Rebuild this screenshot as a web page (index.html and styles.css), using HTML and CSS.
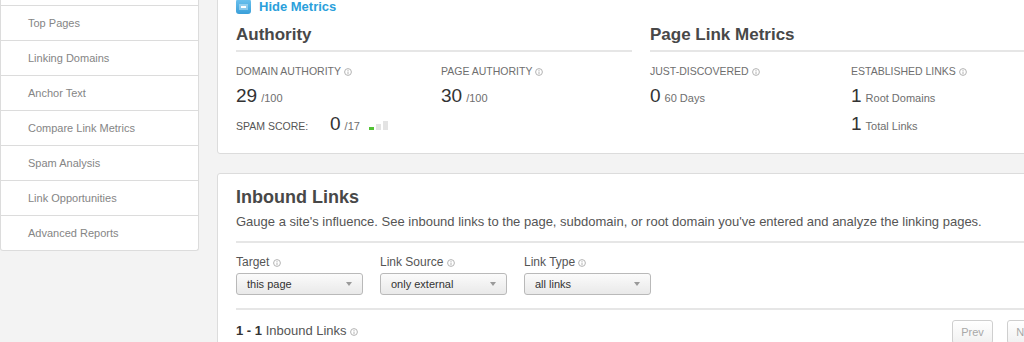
FILE: index.html
```html
<!DOCTYPE html>
<html lang="en">
<head>
    <meta charset="UTF-8">
    <title>Link Explorer</title>
    <link rel="stylesheet" href="styles.css">
</head>
<body>
    <div class="layout">
        <aside class="sidebar">
            <div class="side-item side-top"></div>
            <a class="side-item" href="#">Top Pages</a>
            <a class="side-item" href="#">Linking Domains</a>
            <a class="side-item" href="#">Anchor Text</a>
            <a class="side-item" href="#">Compare Link Metrics</a>
            <a class="side-item" href="#">Spam Analysis</a>
            <a class="side-item" href="#">Link Opportunities</a>
            <a class="side-item" href="#">Advanced Reports</a>
        </aside>
        <main class="main">
            <section class="card metrics-card">
                <a class="toggle" href="#"><span class="toggle-icon"><span class="toggle-bar"></span></span>Hide Metrics</a>
                <div class="metric-groups">
                    <div class="metric-group">
                        <h2>Authority</h2>
                        <div class="metric-grid authority">
                            <div class="metric">
                                <div class="metric-label">DOMAIN AUTHORITY <svg class="info" viewBox="0 0 8 8"><circle cx="4" cy="4" r="3.4"/><path d="M4 3.5v2.7M4 1.9v1"/></svg></div>
                                <div class="metric-value"><span class="num">29</span><span class="unit">/100</span></div>
                                <div class="metric-value spam">
                                    <span class="spam-label">SPAM SCORE:</span><span class="num">0</span><span class="unit">/17</span><span class="spam-bars">
                                        <span class="bar bar-on"></span>
                                        <span class="bar bar-2"></span>
                                        <span class="bar bar-3"></span>
                                    </span>
                                </div>
                            </div>
                            <div class="metric">
                                <div class="metric-label">PAGE AUTHORITY <svg class="info" viewBox="0 0 8 8"><circle cx="4" cy="4" r="3.4"/><path d="M4 3.5v2.7M4 1.9v1"/></svg></div>
                                <div class="metric-value"><span class="num">30</span><span class="unit">/100</span></div>
                            </div>
                        </div>
                    </div>
                    <div class="metric-group">
                        <h2>Page Link Metrics</h2>
                        <div class="metric-grid links">
                            <div class="metric">
                                <div class="metric-label">JUST-DISCOVERED <svg class="info" viewBox="0 0 8 8"><circle cx="4" cy="4" r="3.4"/><path d="M4 3.5v2.7M4 1.9v1"/></svg></div>
                                <div class="metric-value"><span class="num">0</span><span class="unit">60 Days</span></div>
                            </div>
                            <div class="metric">
                                <div class="metric-label">ESTABLISHED LINKS <svg class="info" viewBox="0 0 8 8"><circle cx="4" cy="4" r="3.4"/><path d="M4 3.5v2.7M4 1.9v1"/></svg></div>
                                <div class="metric-value"><span class="num">1</span><span class="unit">Root Domains</span></div>
                                <div class="metric-value next-row"><span class="num">1</span><span class="unit">Total Links</span></div>
                            </div>
                        </div>
                    </div>
                </div>
            </section>

            <section class="card inbound-card">
                <div class="inbound-head">
                    <h1>Inbound Links</h1>
                    <p>Gauge a site's influence. See inbound links to the page, subdomain, or root domain you've entered and analyze the linking pages.</p>
                </div>
                <div class="filters">
                    <div class="filter">
                        <label>Target <svg class="info" viewBox="0 0 8 8"><circle cx="4" cy="4" r="3.4"/><path d="M4 3.5v2.7M4 1.9v1"/></svg></label>
                        <div class="select">this page<span class="caret"></span></div>
                    </div>
                    <div class="filter">
                        <label>Link Source <svg class="info" viewBox="0 0 8 8"><circle cx="4" cy="4" r="3.4"/><path d="M4 3.5v2.7M4 1.9v1"/></svg></label>
                        <div class="select">only external<span class="caret"></span></div>
                    </div>
                    <div class="filter">
                        <label>Link Type <svg class="info" viewBox="0 0 8 8"><circle cx="4" cy="4" r="3.4"/><path d="M4 3.5v2.7M4 1.9v1"/></svg></label>
                        <div class="select">all links<span class="caret"></span></div>
                    </div>
                </div>
                <div class="results">
                    <div class="count"><b>1 - 1</b> Inbound Links <svg class="info" viewBox="0 0 8 8"><circle cx="4" cy="4" r="3.4"/><path d="M4 3.5v2.7M4 1.9v1"/></svg></div>
                    <div class="pager">
                        <button class="page-btn" disabled>Prev</button>
                        <button class="page-btn" disabled>Next</button>
                    </div>
                </div>
            </section>
        </main>
    </div>
</body>
</html>
```

FILE: styles.css
```css
:root {
    --page-bg: #f3f3f3;
    --card-bg: #ffffff;
    --border-color: #dcdcdc;
    --rule-color: #e6e6e6;
    --heading-color: #484848;
    --text-color: #333333;
    --muted-color: #6e6e6e;
    --accent-color: #2b9fdb;
}

body {
    margin: 0;
    background: var(--page-bg);
    font-family: "Liberation Sans", Arial, sans-serif;
    color: var(--text-color);
    overflow: hidden;
}

.layout {
    display: flex;
    align-items: flex-start;
    gap: 18px;
}

/* sidebar */

.sidebar {
    width: 199px;
    flex-shrink: 0;
    box-sizing: border-box;
    margin-top: -29px;
    background: var(--card-bg);
    border: 1px solid var(--border-color);
    border-top: none;
    border-radius: 0 0 3px 3px;
}

.side-item {
    display: block;
    height: 34px;
    line-height: 34px;
    padding-left: 27px;
    border-bottom: 1px solid var(--border-color);
    font-size: 11px;
    color: #858585;
    text-decoration: none;
}

.side-item:last-child {
    border-bottom: none;
}

/* cards */

.main {
    width: 850px;
    flex-shrink: 0;
    margin-top: -12px;
}

.card {
    background: var(--card-bg);
    border: 1px solid var(--border-color);
    border-radius: 3px;
    box-sizing: border-box;
}

.metrics-card {
    padding: 10px 18px 16px;
}

.toggle {
    display: flex;
    align-items: center;
    gap: 8px;
    height: 15px;
    color: var(--accent-color);
    font-size: 13px;
    font-weight: bold;
    text-decoration: none;
}

.toggle-icon {
    width: 15px;
    height: 15px;
    border-radius: 3px;
    background: linear-gradient(#6cc2ef, #3a9fd9);
    display: flex;
    align-items: center;
    justify-content: center;
}

.toggle-bar {
    width: 5px;
    height: 2px;
    background: #ffffff;
    box-shadow: 0 0 0 2px rgba(255, 255, 255, 0.35);
}

.metric-groups {
    display: grid;
    grid-template-columns: 396px 1fr;
    gap: 18px;
    margin-top: 11px;
}

.metric-group h2 {
    margin: 0;
    font-size: 17px;
    line-height: 20px;
    color: var(--heading-color);
    padding-bottom: 5px;
    border-bottom: 2px solid var(--rule-color);
}

.metric-grid {
    display: grid;
    margin-top: 12px;
}

.metric-grid.authority {
    grid-template-columns: 205px 1fr;
}

.metric-grid.links {
    grid-template-columns: 201px 1fr;
}

.metric-label {
    font-size: 10.5px;
    line-height: 14px;
    color: var(--muted-color);
    white-space: nowrap;
}

.info {
    width: 8px;
    height: 8px;
    vertical-align: -1px;
    fill: none;
    stroke: #b3b3b3;
    stroke-width: 1;
}

.metric-value {
    margin-top: 7px;
    line-height: 22px;
    white-space: nowrap;
}

.metric-value.spam,
.metric-value.next-row {
    margin-top: 4px;
}

.num {
    font-size: 19px;
    color: var(--text-color);
}

.unit {
    font-size: 11px;
    color: var(--muted-color);
    margin-left: 4px;
}

.spam-label {
    display: inline-block;
    width: 94px;
    font-size: 10.5px;
    color: #555555;
}

.spam-bars {
    display: inline-flex;
    align-items: flex-end;
    gap: 2px;
    margin-left: 9px;
}

.bar {
    width: 5px;
    background: #e3e3e3;
}

.bar-on {
    height: 3px;
    background: #52c234;
}

.bar-2 {
    height: 6px;
}

.bar-3 {
    height: 9px;
}

/* inbound links */

.inbound-card {
    margin-top: 19px;
    padding: 12px 18px 0;
}

.inbound-head {
    padding-bottom: 11px;
    border-bottom: 2px solid var(--rule-color);
}

.inbound-head h1 {
    margin: 0;
    font-size: 18px;
    line-height: 22px;
    color: var(--heading-color);
}

.inbound-head p {
    margin: 5px 0 0;
    font-size: 13px;
    line-height: 17px;
    color: #555555;
}

.filters {
    display: flex;
    gap: 17px;
    padding: 12px 0 13px;
    border-bottom: 2px solid var(--rule-color);
}

.filter label {
    display: block;
    font-size: 12px;
    line-height: 15px;
    color: #555555;
}

.select {
    margin-top: 3px;
    width: 127px;
    height: 22px;
    box-sizing: border-box;
    padding: 0 10px;
    display: flex;
    align-items: center;
    justify-content: space-between;
    border: 1px solid #b9b9b9;
    border-radius: 3px;
    background: linear-gradient(#fbfbfb, #e9e9e9);
    font-size: 11px;
    color: var(--text-color);
}

.caret {
    border-left: 3px solid transparent;
    border-right: 3px solid transparent;
    border-top: 4px solid #9a9a9a;
}

.results {
    display: flex;
    justify-content: space-between;
    align-items: flex-start;
    margin-top: 12px;
}

.count {
    font-size: 13px;
    line-height: 17px;
    color: #555555;
}

.count b {
    color: var(--text-color);
}

.pager {
    display: flex;
    gap: 14px;
    margin-top: -2px;
}

.page-btn {
    width: 41px;
    height: 24px;
    padding: 0;
    border: 1px solid #cfcfcf;
    border-radius: 3px;
    background: linear-gradient(#ffffff, #f1f1f1);
    font-family: inherit;
    font-size: 11px;
    color: #a8a8a8;
}
```
